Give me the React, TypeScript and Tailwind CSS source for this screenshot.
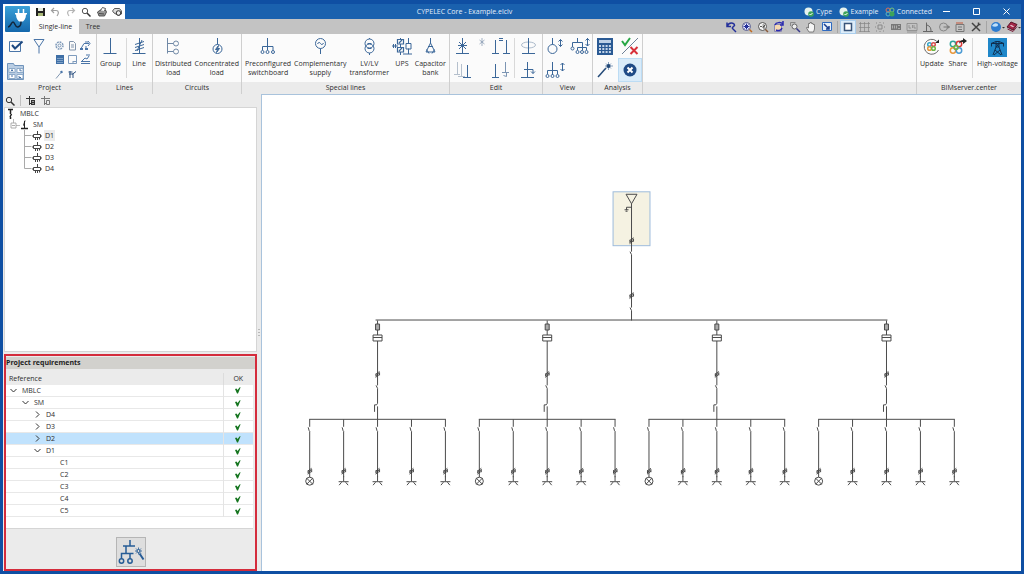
import type { ReactNode } from "react";
import clsx from "clsx";

type IconProps = { w?: number; h?: number; className?: string; children: ReactNode };

function Svg({ w = 16, h = 17, className, children }: IconProps) {
  return (
    <svg
      width={w}
      height={h}
      viewBox={`0 0 ${w} ${h}`}
      fill="none"
      stroke="currentColor"
      strokeWidth={1}
      className={clsx("shrink-0", className)}
      aria-hidden
    >
      {children}
    </svg>
  );
}

/* ---------- ribbon icons ---------- */

const GroupIcon = () => (
  <Svg w={14}>
    <path d="M7.5 0v15.5M0.5 15.5h13" />
  </Svg>
);

const LineIcon = () => (
  <Svg w={14}>
    <path d="M7.5 0v15.5M0.5 15.5h13M3 6.5l9-3M3 9.5l9-3M3 12.5l9-3M5 13l5-11" />
  </Svg>
);

const DistributedIcon = () => (
  <Svg w={14} className="text-[#7089a6]">
    <path d="M1.5 0v15.5M1.5 5.5h6M1.5 13.5h6" />
    <circle cx="10" cy="5.5" r="2.5" />
    <circle cx="10" cy="13.5" r="2.5" />
  </Svg>
);

const ConcentratedIcon = () => (
  <Svg w={12}>
    <circle cx="6.5" cy="11" r="4.5" />
    <path d="M6.5 0v6.5" />
    <path d="M7.5 7.5L4.5 11.5h2l-1 3 3-4h-2z" fill="currentColor" />
  </Svg>
);

const SwitchboardIcon = () => (
  <Svg w={16}>
    <path d="M7.5 0v12M2.5 12V8.5h10.500V12" />
    <circle cx="2.5" cy="14" r="1.5" />
    <circle cx="7.5" cy="14" r="1.5" />
    <circle cx="13" cy="14" r="1.5" />
  </Svg>
);

const SupplyIcon = () => (
  <Svg w={12}>
    <circle cx="6.5" cy="5.5" r="5" />
    <path d="M6.5 10.500v5.5M3.500 6c1-2 2-2 3-.5s2 1.500 3-.5" />
  </Svg>
);

const TransformerIcon = () => (
  <Svg w={12}>
    <circle cx="6.5" cy="5.500" r="4.500" />
    <circle cx="6.5" cy="10.500" r="4.500" />
    <path d="M6.5 0v1M6.5 15V17M4.5 5.5h4M4.5 10.500h4" />
  </Svg>
);

const UpsIcon = () => (
  <Svg w={20}>
    <path d="M0 8h6M1.5 6v4M3.5 6v4M8.500 0v1M8.5 6v3M8.500 14v3" />
    <path d="M5.500 1.500h6v4.500h-6zM5.500 9.500h6v4.500h-6zM7 5l3-3M7 13l3-3" strokeWidth={1.200} />
    <path d="M16.500 0v5.5M16.500 10.500v5.5M14 5.500h5v5.500h-5zM11 16h9" />
  </Svg>
);

const CapacitorIcon = () => (
  <Svg w={12}>
    <path d="M6.500 0v5M6.500 5l-4.500 9M6.500 5l4.500 9M2 14h9M4 8.500h5M2.500 11.500l2.500 4M10.500 11.500L8 15.500" />
  </Svg>
);

const CheckBoxIcon = () => (
  <Svg w={16} h={16}>
    <path d="M1.500 3.500h11v10h-11z" />
    <path d="M4 7l3 3.500 7.500-7" strokeWidth={2} className="text-[#1c4880]" />
  </Svg>
);

const FilterIcon = () => (
  <Svg w={12} h={16}>
    <path d="M1 1.500h10L6 9zM6 9v6.500" />
  </Svg>
);

const FolderGridIcon = () => (
  <Svg w={18} h={18}>
    <path d="M0.500 17.500v-16h6l1 2h9v14z" fill="#b9cde3" stroke="#6f93bb" />
    <path d="M2 6.500h6v4H2zM10 6.500h6v4h-6zM2 12.500h6v4H2zM10 12.500h6v4h-6z" fill="#fff" stroke="#8eabc9" />
    <path d="M4 9.500l1-2 1 2M12 8h2v1.500M4 14h2M12 14v1.500h2" />
  </Svg>
);

const projectTools: { name: string; art: ReactNode }[] = [
  {
    name: "Settings",
    art: (
      <g stroke="#7d98b8">
        <circle cx="5.5" cy="5.5" r="3.500" strokeWidth={1.500} strokeDasharray="1.800 0.900" />
        <circle cx="5.5" cy="5.5" r="1.500" />
      </g>
    ),
  },
  { name: "Report", art: <path d="M2.500 1.500h4l2 2v6.500h-6zM4 5h3M4 7h3" stroke="#8194ab" /> },
  {
    name: "Network",
    art: (
      <>
        <path d="M1 8.500l3-5h5M6 9V6M8 1l2 2.500L8 6M5 2h3" />
        <path d="M0 8h3v2H0zM5 8h3v2H5z" fill="currentColor" stroke="none" />
      </>
    ),
  },
  {
    name: "Table",
    art: (
      <>
        <path d="M2 1h8v9H2z" fill="#3f6fa6" stroke="none" />
        <path d="M3 4.500h6M3 6.500h6M3 8.500h6" stroke="#a9c2de" strokeWidth={0.6} />
      </>
    ),
  },
  { name: "Drawing sheet", art: <path d="M1.500 1.500h8v8h-8zM6 7.500h3.500M6 7v2.500" stroke="#7e9bbd" /> },
  { name: "Earthing", art: <path d="M1 9.500h9M1 7.500h9M2 7l3-3 2 1 2-3M6 1h4" /> },
  {
    name: "Pencil",
    art: (
      <>
        <path d="M2 9.500L7 3.500" stroke="#8096b0" />
        <path d="M6.500 3.500l2-1" strokeWidth={2} />
      </>
    ),
  },
  { name: "Cables", art: <path d="M3 2v7M6 4v5M1.500 3h4M2 5h3M5 5.500l4-3" stroke="#2b5080" /> },
];

const DeviceIcon = () => (
  <Svg>
    <path d="M7.500 0v15.500M1 15.500h13M4 4l7 7M11 4l-7 7M3 7.500h9" />
  </Svg>
);

const SparkIcon = () => (
  <Svg w={6} h={8} className="self-start text-[#7e93ac]">
    <path d="M3 0v8M0.500 2l5 4M5.500 2l-5 4" strokeWidth={0.7} />
  </Svg>
);

const CopyIcon = () => (
  <Svg w={18}>
    <path d="M3.500 2v13.500M0 15.500h7M14.500 2v13.500M11 15.500h7M7 0.500h4M7 2.500h4" />
  </Svg>
);

const RotateIcon = () => (
  <Svg>
    <ellipse cx="7.500" cy="7" rx="7" ry="3" stroke="#aebccc" />
    <path d="M7.500 0v15.500M1 15.500h13" />
  </Svg>
);

const StackIcon = () => (
  <Svg w={18}>
    <path d="M3.500 0v12.500M0 12.500h6M7.500 2v12.500M4 14.500h7" stroke="#b5c0cd" />
    <path d="M13.500 3v12.500M9 15.500h8" />
  </Svg>
);

const MoveIcon = () => (
  <Svg w={18}>
    <path d="M3.500 2v13.500M0 15.500h7" />
    <path d="M13.500 0v10M10 10.500h7M14.500 10.500v4l-3-1" stroke="#7c95b3" />
  </Svg>
);

const InsertIcon = () => (
  <Svg>
    <path d="M6.500 0v15.500M0 15.500h13M3 7.500h9M12 7.500v4M10 9.500l2 2 2-2" />
  </Svg>
);

const CircleHeightIcon = () => (
  <Svg w={18}>
    <circle cx="6.5" cy="11" r="4.500" />
    <path d="M6.5 0v6.500M14.500 1.500v7M12.500 3.500l2-2 2 2M12.500 6.500l2 2 2-2" />
  </Svg>
);

const TreeHeightIcon = () => (
  <Svg w={20}>
    <path d="M7.500 0v4M2.500 9V4.500h10V12M7.500 12V9.500h9V12M17.500 0v8M15.500 2.500l2-2 2 2M15.500 6l2 2 2-2" />
    <circle cx="2.5" cy="10.500" r="1.500" />
    <circle cx="7.500" cy="14" r="1.500" />
    <circle cx="12" cy="14" r="1.500" />
    <circle cx="16.500" cy="14" r="1.500" />
  </Svg>
);

const BoardHeightIcon = () => (
  <Svg w={20}>
    <path d="M7.500 0v13M2.500 12V8.500h10V12M17.500 1v8M15.500 3l2-2 2 2M15.500 7l2 2 2-2" />
    <circle cx="2.500" cy="14" r="1.500" />
    <circle cx="7.500" cy="14" r="1.500" />
    <circle cx="12.500" cy="14" r="1.500" />
  </Svg>
);

const CalculatorIcon = () => (
  <Svg w={16} h={17}>
    <path d="M0 0h16v17H0z" fill="#2a5a94" stroke="none" />
    <path d="M2 2h12v3H2z" fill="#bcd0e6" stroke="none" />
    <path d="M2 8h12M2 11h12M2 14h12" stroke="#c3d4e8" strokeWidth={2} strokeDasharray="2 1.300" />
  </Svg>
);

const CheckCrossIcon = () => (
  <Svg w={18} h={18}>
    <path d="M1 17L17 1" stroke="#6d8096" />
    <path d="M1 4l3 4 5-7" stroke="#28a745" strokeWidth={2} />
    <path d="M9.500 10l7 7M16.500 10l-7 7" stroke="#d8303a" strokeWidth={2} />
  </Svg>
);

const WandIcon = () => (
  <Svg w={16} h={16}>
    <path d="M1 15L9 6" strokeWidth={1.500} stroke="#244a78" />
    <path d="M11.500 0v8M8 4h8M9 1.500l5 5M14 1.500l-5 5" stroke="#6d8cb0" strokeWidth={0.8} />
    <circle cx="11.500" cy="4" r="2" fill="#244a78" stroke="none" />
  </Svg>
);

const CloseRoundIcon = () => (
  <Svg w={14} h={14}>
    <circle cx="7" cy="7" r="6.500" fill="#1f4a86" stroke="none" />
    <path d="M4.500 4.500l5 5M9.500 4.500l-5 5" stroke="#fff" strokeWidth={2} />
  </Svg>
);

const UpdateIcon = () => (
  <Svg w={17} h={17}>
    <path d="M13.500 3A7.500 7.500 0 1 0 15.500 12" stroke="#6b6b6b" />
    <path d="M12 5h4V1.500z" fill="#222" stroke="none" />
    <g strokeWidth={1.500}>
      <circle cx="6.500" cy="6.500" r="1.800" stroke="#35a6c9" />
      <circle cx="10.500" cy="6.500" r="1.800" stroke="#d84a4a" />
      <circle cx="6.500" cy="10.500" r="1.800" stroke="#e8973a" />
      <circle cx="10.500" cy="10.500" r="1.800" stroke="#6cb644" />
    </g>
  </Svg>
);

const ShareIcon = () => (
  <Svg w={18} h={17}>
    <g strokeWidth={1.500}>
      <circle cx="4" cy="6" r="2.700" stroke="#2fa39a" />
      <circle cx="10" cy="6" r="2.700" stroke="#d83a3a" />
      <circle cx="4" cy="12.500" r="2.700" stroke="#e8973a" />
      <circle cx="10" cy="12.500" r="2.700" stroke="#4a9ad4" />
      <circle cx="7" cy="9.500" r="2" stroke="#6cb644" />
    </g>
    <path d="M10 6c0-3 2-4 4-4V0l4 3-4 3V4c-2 0-3 0-4 2z" fill="#222" stroke="none" />
  </Svg>
);

const PylonIcon = () => (
  <Svg w={19} h={19}>
    <path d="M0 0h19v19H0z" fill="#1f87c9" stroke="none" />
    <g stroke="#0f2f50">
      <path d="M5 17l3-8V3.500M14 17l-3-8V3.500M3 5.500l5-2h3l5 2M3 5.500h13M8 9h3M7 12l6 5M12 12l-6 5M8 5.500L11 9M11 5.500L8 9M3.500 5.500v3M15.500 5.500v3" />
    </g>
  </Svg>
);

/* ---------- view toolbar on the right of the tabs ---------- */

const viewTools: { name: string; art: ReactNode }[] = [
  {
    name: "Zoom previous",
    art: (
      <>
        <path d="M2 1.500v4h4M2.500 5c1-4 7-4 7-.5L7 7" stroke="#24309a" strokeWidth={1.500} />
        <path d="M7 7l4 4" stroke="#24309a" strokeWidth={1.500} />
      </>
    ),
  },
  {
    name: "Zoom extents",
    art: (
      <>
        <circle cx="5.500" cy="5.500" r="4" stroke="#555a8a" fill="#eef" />
        <path d="M5.500 2.500v6M2.500 5.500h6M3.500 3.500l4 4M7.500 3.500l-4 4" stroke="#24309a" />
        <path d="M8.500 8.500L11 11" stroke="#c06a20" strokeWidth={1.500} />
      </>
    ),
  },
  {
    name: "Zoom x2",
    art: (
      <>
        <circle cx="5.500" cy="5.500" r="4" stroke="#555" fill="#f4f4f4" />
        <path d="M3 5.500h2M5.500 4H7.500v1.500h-1.500V7h2" stroke="#333" strokeWidth={0.8} />
        <path d="M8.500 8.500L11 11" stroke="#8a5a3a" strokeWidth={1.500} />
      </>
    ),
  },
  {
    name: "Redraw",
    art: (
      <>
        <path d="M1.500 3.500h7v7h-7z" fill="#f7d9b0" stroke="#8a8ab5" />
        <path d="M2 4c1-3 6-3 8-1M10 0v4H7M9 7c-1 3-4 3-6 2" stroke="#2a2ab0" strokeWidth={1.500} />
      </>
    ),
  },
  {
    name: "Zoom window",
    art: (
      <>
        <path d="M1.500 5V1.500h5" stroke="#888" />
        <circle cx="5.500" cy="5.500" r="2.500" stroke="#666" fill="#eee" />
        <path d="M7.500 7.500L11 11" stroke="#3a3a8a" strokeWidth={1.500} />
      </>
    ),
  },
  {
    name: "Pan",
    art: <path d="M4 11L1.500 7l.5-1 1.500 1V2.500H5V1.500h1.500v1H8V3.500h1.500V8L8.500 11z" fill="#f5f5f5" stroke="#666" strokeWidth={0.8} />,
  },
  {
    name: "Full screen",
    art: (
      <>
        <path d="M1.500 1.500h9v8h-9z" fill="#e8f0fa" stroke="#2f6ac0" />
        <path d="M3 3l5 5M8 5v3H5" stroke="#1b3f90" strokeWidth={1.500} />
      </>
    ),
  },
];

const snapTools: { name: string; active?: boolean; art: ReactNode }[] = [
  { name: "Frame", active: true, art: <path d="M2.500 2.500h7v7h-7z" fill="#fff" stroke="#38547a" strokeWidth={1.500} /> },
  { name: "Grid", art: <path d="M2.500 1v10M6.500 1v10M10.500 1v10M1 2.500h11M1 6.500h11M1 10.500h11" stroke="#858585" strokeWidth={0.7} /> },
  { name: "Snap", art: <path d="M4 4h4v4H4zM1 6h1M10 6h1M6 1v1M6 10v1M2 2h1M9 2h1M2 10h1M9 10h1" stroke="#888" /> },
  {
    name: "Keyboard",
    art: (
      <>
        <path d="M1 3h10v6H1z" fill="#777" stroke="none" />
        <path d="M2.500 4.500v3M4.500 4.500v3M6.500 4.500v3M8 4.500h2M8 7.500h2" stroke="#c3c3c3" strokeWidth={0.7} />
      </>
    ),
  },
  { name: "Measure", art: <path d="M1 2.500h10v7H1zM3 4v3h2M6.500 4v3M8 4v3h2M1 11h10" stroke="#888" strokeWidth={0.8} /> },
  { name: "Angle", art: <path d="M4.500 1.500v8.500M1 10.500h10M5 4c3 1 4 3 4 6" stroke="#666" /> },
  {
    name: "Circle",
    art: (
      <>
        <circle cx="5.500" cy="6" r="4" stroke="#888" />
        <path d="M5.500 6h6M9.500 4.500L11.500 6l-2 1.500" stroke="#777" />
      </>
    ),
  },
  {
    name: "Layers",
    art: (
      <>
        <path d="M2 3.500h8v7H2zM4 6h4M4 8.500h4" stroke="#777" />
        <path d="M2 2h7" stroke="#c4573a" />
      </>
    ),
  },
  { name: "Tools", art: <path d="M2 2l8 8M9.500 3L2 10M8.500 1.500v2h2" stroke="#444" strokeWidth={1.500} /> },
];

/* ---------- ribbon building blocks ---------- */

function RibbonGroup({ title, className, children }: { title: string; className: string; children: ReactNode }) {
  return (
    <section className={clsx("flex shrink-0 flex-col border-r border-[#cfcfcf]", className)}>
      <div className="flex h-12 bg-[#fbfbfb]">{children}</div>
      <h2 className="h-3 bg-[#ebebeb] text-center leading-3">{title}</h2>
    </section>
  );
}

function BigButton({ icon, lines }: { icon: ReactNode; lines: string[] }) {
  return (
    <button className="flex flex-col items-center gap-1 whitespace-nowrap pt-1 leading-[9px] text-[#3b6799]">
      {icon}
      <span className="text-[#2d2d2d]">
        {lines.map((l) => (
          <span key={l} className="block">
            {l}
          </span>
        ))}
      </span>
    </button>
  );
}

function IconButton({ label, className, children }: { label: string; className?: string; children?: ReactNode }) {
  return (
    <button aria-label={label} className={clsx("flex items-center justify-center", className)}>
      {children}
    </button>
  );
}

const Divider = () => <span className="my-1 w-px bg-[#d9d9d9]" />;

function Ribbon() {
  return (
    <div className="flex text-[#2d2d2d]">
      <RibbonGroup title="Project" className="w-[94px]">
        <div className="flex w-full gap-1 px-1 pt-1 text-[#4a75a8]">
          <div className="flex flex-col items-center gap-2">
            <IconButton label="General options"><CheckBoxIcon /></IconButton>
            <IconButton label="Libraries"><FolderGridIcon /></IconButton>
          </div>
          <IconButton label="Supply" className="ml-1 self-start"><FilterIcon /></IconButton>
          <div className="ml-1 grid flex-1 grid-cols-3 grid-rows-3">
            {projectTools.map((t) => (
              <IconButton key={t.name} label={t.name}>
                <Svg w={11} h={11}>{t.art}</Svg>
              </IconButton>
            ))}
          </div>
        </div>
      </RibbonGroup>

      <RibbonGroup title="Lines" className="w-14">
        <div className="flex w-full justify-between pl-[3px] pr-[6px]">
          <BigButton icon={<GroupIcon />} lines={["Group"]} />
          <Divider />
          <BigButton icon={<LineIcon />} lines={["Line"]} />
        </div>
      </RibbonGroup>

      <RibbonGroup title="Circuits" className="w-[89px]">
        <div className="flex w-full justify-between px-[2px]">
          <BigButton icon={<DistributedIcon />} lines={["Distributed", "load"]} />
          <BigButton icon={<ConcentratedIcon />} lines={["Concentrated", "load"]} />
        </div>
      </RibbonGroup>

      <RibbonGroup title="Special lines" className="w-[208px]">
        <div className="flex w-full justify-between px-[3px]">
          <BigButton icon={<SwitchboardIcon />} lines={["Preconfigured", "switchboard"]} />
          <BigButton icon={<SupplyIcon />} lines={["Complementary", "supply"]} />
          <BigButton icon={<TransformerIcon />} lines={["LV/LV", "transformer"]} />
          <BigButton icon={<UpsIcon />} lines={["UPS"]} />
          <BigButton icon={<CapacitorIcon />} lines={["Capacitor", "bank"]} />
        </div>
      </RibbonGroup>

      <RibbonGroup title="Edit" className="w-[93px]">
        <div className="grid flex-1 grid-cols-[26px_12px_26px] grid-rows-2 text-[#3b6799]">
          <IconButton label="Edit device"><DeviceIcon /></IconButton>
          <IconButton label="New" className="pt-1"><SparkIcon /></IconButton>
          <IconButton label="Copy"><CopyIcon /></IconButton>
          <IconButton label="Stack"><StackIcon /></IconButton>
          <span />
          <IconButton label="Move"><MoveIcon /></IconButton>
        </div>
        <Divider />
        <div className="grid w-[27px] grid-rows-2 text-[#3b6799]">
          <IconButton label="Rotate"><RotateIcon /></IconButton>
          <IconButton label="Insert"><InsertIcon /></IconButton>
        </div>
      </RibbonGroup>

      <RibbonGroup title="View" className="w-[50px]">
        <div className="grid w-full grid-cols-2 grid-rows-2 text-[#3b6799]">
          <IconButton label="Load height"><CircleHeightIcon /></IconButton>
          <IconButton label="Tree height"><TreeHeightIcon /></IconButton>
          <IconButton label="Board height"><BoardHeightIcon /></IconButton>
        </div>
      </RibbonGroup>

      <RibbonGroup title="Analysis" className="w-[50px]">
        <div className="grid w-full grid-cols-2 grid-rows-2">
          <IconButton label="Calculate"><CalculatorIcon /></IconButton>
          <IconButton label="Check"><CheckCrossIcon /></IconButton>
          <IconButton label="Design"><WandIcon /></IconButton>
          <IconButton label="Requirements" className="border border-[#bcdcf4] bg-[#d9ebf9]"><CloseRoundIcon /></IconButton>
        </div>
      </RibbonGroup>

      <div className="flex flex-1 flex-col border-r border-[#cfcfcf]">
        <div className="h-12 bg-[#fbfbfb]" />
        <div className="h-3 bg-[#ebebeb]" />
      </div>

      <section className="flex w-[104px] shrink-0 flex-col">
        <div className="flex h-12 justify-between bg-[#fbfbfb] px-[3px]">
          <BigButton icon={<UpdateIcon />} lines={["Update"]} />
          <BigButton icon={<ShareIcon />} lines={["Share"]} />
          <Divider />
          <button className="flex flex-col items-center gap-[2px] whitespace-nowrap pt-1 leading-[9px]">
            <PylonIcon />
            High-voltage
          </button>
        </div>
        <h2 className="h-3 bg-[#ebebeb] text-center leading-3">BIMserver.center</h2>
      </section>
    </div>
  );
}

/* ---------- title bar ---------- */

const quickTools: { name: string; art: ReactNode }[] = [
  {
    name: "Save",
    art: (
      <>
        <path d="M1 1h9v8H1z" fill="#222" stroke="none" />
        <path d="M3 1h5v3H3z" fill="#e8ecdc" stroke="none" />
        <path d="M3 6h5v3H3z" fill="#a9b878" stroke="none" />
      </>
    ),
  },
  { name: "Undo", art: <path d="M4 1L1.500 3.500 4 6M1.500 3.500H6c3 0 3 3 1 5.500" stroke="#9f9f9f" strokeWidth={1.200} /> },
  { name: "Redo", art: <path d="M6 1l2.500 2.500L6 6M8.500 3.500H4c-3 0-3 3-1 5.500" stroke="#b4b4b4" strokeWidth={1.200} /> },
  {
    name: "Search",
    art: (
      <>
        <circle cx="4" cy="4" r="2.700" stroke="#555" />
        <path d="M6 6l3.500 3.500" stroke="#333" strokeWidth={1.500} />
      </>
    ),
  },
  {
    name: "Print",
    art: (
      <>
        <path d="M0.500 5l3-2h5l1 2-2 4H2z" fill="#999" stroke="#333" strokeWidth={0.8} />
        <path d="M3.500 3.500l2-3 3 1-1 2.500M2 6.500l5 .5" fill="#fff" stroke="#333" strokeWidth={0.8} />
      </>
    ),
  },
  {
    name: "Export",
    art: (
      <>
        <path d="M0.500 4l2-2.500h5L9.500 4v3L6.500 8.500 2 6z" fill="#ddd" stroke="#333" strokeWidth={0.8} />
        <circle cx="6.500" cy="6" r="2.300" fill="#eee" stroke="#333" />
      </>
    ),
  },
];

function Globe() {
  return (
    <Svg w={10} h={10}>
      <circle cx="4.500" cy="4.500" r="4" fill="#e6f2ee" stroke="none" />
      <circle cx="7" cy="7" r="2.800" fill="#3da35a" stroke="none" />
      <path d="M5.500 7l1 1 2-2" stroke="#fff" />
    </Svg>
  );
}

function AppLogo() {
  return (
    <div className="bg-white p-[2px]">
      <svg width={25} height={26} viewBox="0 0 25 26" fill="none" aria-hidden>
        <defs>
          <linearGradient id="logo" x1="0" y1="0" x2="0" y2="1">
            <stop offset="0" stopColor="#3aa0d8" />
            <stop offset="1" stopColor="#1568ac" />
          </linearGradient>
        </defs>
        <rect width="25" height="26" rx="1" fill="url(#logo)" />
        <path d="M3 21c3 0 3-5 5-5s2 6 5 5 3-3 3-6" stroke="#12263c" strokeWidth={1.500} />
        <path d="M10 7h12v1.500h-1c0 4-2 6-3 7h-4c-1-1-3-3-3-7h-1z" fill="#fff" />
        <path d="M13.500 3v4M18.500 3v4" stroke="#fff" strokeWidth={1.500} />
      </svg>
    </div>
  );
}

function Header() {
  return (
    <header className="flex bg-[#c3c3c3]">
      <AppLogo />
      <div className="flex flex-1 flex-col">
        <div className="flex h-[15px] bg-[#1a61ae] text-[#e4eefa]">
          <div className="flex w-[93px] items-center justify-around bg-white">
            {quickTools.map((t) => (
              <button key={t.name} aria-label={t.name}>
                <Svg w={10} h={10}>{t.art}</Svg>
              </button>
            ))}
          </div>
          <h1 className="flex-1 self-center text-center">CYPELEC Core - Example.elclv</h1>
          <div className="flex w-[128px] items-center justify-between">
            <span className="flex items-center gap-[2px]"><Globe />Cype</span>
            <span className="flex items-center gap-[2px]"><Globe />Example</span>
            <span className="flex items-center gap-[2px]">
              <Svg w={10} h={10}>
                <circle cx="3" cy="3" r="2" stroke="#d8705a" />
                <circle cx="7" cy="3" r="2" stroke="#7ac27a" />
                <circle cx="3" cy="7" r="2" stroke="#5ab7c2" />
                <circle cx="7" cy="7" r="2.500" fill="#3da35a" stroke="none" />
              </Svg>
              Connected
            </span>
          </div>
          <div className="flex w-[89px] items-center justify-around text-white">
            <button aria-label="Minimize"><Svg w={7} h={7}><path d="M0 3.500h7" /></Svg></button>
            <button aria-label="Maximize"><Svg w={7} h={7}><path d="M0.500 0.500h6v6h-6z" /></Svg></button>
            <button aria-label="Close"><Svg w={7} h={7}><path d="M0.500 0.500l6 6M6.500 0.500l-6 6" /></Svg></button>
          </div>
        </div>
        <div className="flex h-[15px] items-center">
          <nav className="flex self-stretch">
            <button className="w-[47px] bg-[#fbfbfb] text-[#2d2d2d]">Single-line</button>
            <button className="w-7 text-[#2d2d2d]">Tree</button>
          </nav>
          <div className="ml-auto flex h-full items-center">
            {viewTools.map((t) => (
              <IconButton key={t.name} label={t.name} className="w-4">
                <Svg w={12} h={12}>{t.art}</Svg>
              </IconButton>
            ))}
            <span className="mx-[2px] h-3 w-px bg-[#a5a5a5]" />
            {snapTools.map((t) => (
              <IconButton
                key={t.name}
                label={t.name}
                className={clsx("h-[14px] w-4", t.active && "border border-[#a9cdec] bg-[#dcecf9]")}
              >
                <Svg w={12} h={12}>{t.art}</Svg>
              </IconButton>
            ))}
            <span className="mx-[2px] h-3 w-px bg-[#a5a5a5]" />
            <IconButton label="Help" className="w-4">
              <Svg w={15} h={12}>
                <circle cx="6" cy="6" r="5" fill="#2c7cd0" stroke="none" />
                <path d="M2 5c2-4 6-3 6-1S4 6 2 5z" fill="#bfe0fa" stroke="none" />
                <path d="M12 6h3l-1.500 1.500z" fill="#333" stroke="none" />
              </Svg>
            </IconButton>
            <IconButton label="Manual" className="w-4">
              <Svg w={15} h={12}>
                <path d="M1 6l4-5 6 2.500-4 5.500z" fill="#a52a4a" stroke="#5a1428" />
                <path d="M1.500 8l5.500 2.500 4-5" stroke="#7a1c38" />
                <path d="M4.500 4.500l3 1" stroke="#fff" />
                <path d="M12 6h3l-1.500 1.500z" fill="#333" stroke="none" />
              </Svg>
            </IconButton>
          </div>
        </div>
      </div>
    </header>
  );
}

/* ---------- installation tree ---------- */

function BoardGlyph() {
  return (
    <Svg w={10} h={11} className="text-[#444]">
      <path d="M5.500 1v3M1.500 4.500h7v3h-7zM0 6h1.500M8.500 6H10M3.500 7.500V10M5.500 7.500V10M7.500 7.500V9.500" />
    </Svg>
  );
}

function InstallationTree() {
  return (
    <>
      <div className="flex h-[13px] items-center gap-[5px] pl-px text-[#333]">
        <button aria-label="Find">
          <Svg w={10} h={10}>
            <circle cx="4" cy="4" r="2.700" />
            <path d="M6 6l3.500 3.500" strokeWidth={1.500} />
          </Svg>
        </button>
        <span className="h-[11px] w-px bg-[#c0c0c0]" />
        <button aria-label="Expand all">
          <Svg w={10} h={10}>
            <path d="M0 2.500h9M3.500 0v9M3.500 7.500h2" />
            <path d="M5 4h4v5H5z" fill="currentColor" stroke="none" />
            <path d="M6 5.500h2M6 7.500h2" stroke="#ccc" strokeWidth={0.7} />
          </Svg>
        </button>
        <button aria-label="Collapse all">
          <Svg w={10} h={10} className="text-[#777]">
            <path d="M0 2.500h9M3.500 0v9M3.500 7.500h2M5.500 4.500h3v4h-3z" />
          </Svg>
        </button>
      </div>
      <div className="min-h-0 flex-1 border border-[#d5d5d5] bg-white leading-[11px]">
        <div className="flex items-center gap-1 pl-[2px]">
          <Svg w={9} h={11} className="text-[#222]">
            <path d="M1 1.500h5M3.500 2v4M4.500 6L3 9M3.500 9v2" strokeWidth={1.500} />
          </Svg>
          MBLC
        </div>
        <div className="flex items-center pl-[3px]">
          <Svg w={24} h={11}>
            <path d="M5.500 0v4M8 6.500h4" stroke="#bbb" />
            <path d="M3 4h5v5H3zM4 6.500h3" stroke="#999" strokeWidth={0.8} />
            <path d="M17 1.500l-1.500 5M16.500 2v7" stroke="#222" />
            <path d="M13 9.500h7" stroke="#222" strokeWidth={1.500} />
          </Svg>
          <span className="ml-px">SM</span>
        </div>
        {["D1", "D2", "D3", "D4"].map((d, i) => (
          <div key={d} className="flex items-center pl-[19px]">
            <Svg w={8} h={11}>
              <path d={i === 3 ? "M0.500 0v5.500h7" : "M0.500 0v11M0.500 5.500h7"} stroke="#aaa" />
            </Svg>
            <BoardGlyph />
            <span className={clsx("ml-[2px] px-px", i === 0 && "bg-[#ececec]")}>{d}</span>
          </div>
        ))}
      </div>
    </>
  );
}

/* ---------- requirements panel ---------- */

const requirements: { ref: string; pad: string; open?: boolean; selected?: boolean }[] = [
  { ref: "MBLC", pad: "pl-1", open: true },
  { ref: "SM", pad: "pl-4", open: true },
  { ref: "D4", pad: "pl-7", open: false },
  { ref: "D3", pad: "pl-7", open: false },
  { ref: "D2", pad: "pl-7", open: false, selected: true },
  { ref: "D1", pad: "pl-7", open: true },
  { ref: "C1", pad: "pl-[54px]" },
  { ref: "C2", pad: "pl-[54px]" },
  { ref: "C3", pad: "pl-[54px]" },
  { ref: "C4", pad: "pl-[54px]" },
  { ref: "C5", pad: "pl-[54px]" },
];

function Requirements() {
  return (
    <section className="mt-[2px] border-2 border-[#d42c3c] pt-px">
      <h2 className="h-3 bg-[#d2d1cd] font-bold leading-3 text-[#222]">Project requirements</h2>
      <div className="mr-[2px] mt-1 border-b border-[#d5d5d5] bg-white pb-[11px]">
        <table className="w-full table-fixed border-collapse">
          <thead>
            <tr className="h-3 bg-[#ebebeb] leading-[11px]">
              <th scope="col" className="p-0 pl-[3px] text-left font-normal">Reference</th>
              <th scope="col" className="w-[30px] border-l border-[#dcdcdc] p-0 font-normal">OK</th>
            </tr>
          </thead>
          <tbody>
            {requirements.map((r) => (
              <tr key={r.ref} className={clsx("h-3 border-b border-[#e8e8e8] leading-[11px]", r.selected && "bg-[#c0e2fd]")}>
                <td className={clsx("p-0", r.pad)}>
                  <span className="flex items-center gap-[5px]">
                    {r.open !== undefined && (
                      <Svg w={7} h={7} className="text-[#333]">
                        <path d={r.open ? "M0.500 2l3 3 3-3" : "M2 0.500l3 3-3 3"} />
                      </Svg>
                    )}
                    {r.ref}
                  </span>
                </td>
                <td className="border-l border-[#e4e4e4] p-0">
                  <svg width={8} height={8} viewBox="0 0 8 8" className="mx-auto" role="img" aria-label="OK">
                    <path d="M1 3l1.500-.5 1 1.500L6 1l.5.5-2.500 6H3z" fill="#15751f" />
                  </svg>
                </td>
              </tr>
            ))}
          </tbody>
        </table>
      </div>
      <div className="flex h-10 items-end justify-center pb-[2px]">
        <button
          aria-label="Design installation"
          className="flex size-[30px] items-center justify-center border border-[#b5b5b5] bg-[#dedede] text-[#265c96]"
        >
          <Svg w={28} h={28}>
            <g strokeWidth={1.500}>
              <path d="M13 2v6M6 8h12M9 8v8M4.500 21v-5.500h12M13 16v5" />
              <circle cx="4.500" cy="23" r="2.200" />
              <circle cx="13" cy="23" r="2.200" />
              <path d="M22.500 15.500l4 6" strokeWidth={2} />
            </g>
            <path d="M21.500 9.500v7M18 13h7M19 10.500l5 5M24 10.500l-5 5" strokeWidth={0.8} />
            <circle cx="21.500" cy="13" r="1.500" fill="#dedede" />
          </Svg>
        </button>
      </div>
    </section>
  );
}

/* ---------- single-line diagram ---------- */

const FEEDERS = [115, 285, 455, 625];
const LOADS = [-68, -34, 0, 34, 68];

// Phase marks drawn across a conductor
function CableMark({ y }: { y: number }) {
  return (
    <path
      d={`M-2 ${y}l4-3M-2 ${y + 1.5}l4-3M-2 ${y + 3}l4-3M-1.500 ${y - 1}v3M2 ${y - 2}v3`}
      stroke="#333"
      strokeWidth={0.8}
    />
  );
}

function Feeder({ x }: { x: number }) {
  return (
    <g transform={`translate(${x} 0)`}>
      <path d="M0 226v65M0 294v15M0 312v13" />
      <path d="M-2 229.500h4v6h-4z" fill="#aaa" />
      <path d="M-4.500 240.500h9v6h-9zM-4.500 243h9" fill="#fff" />
      <CableMark y={280} />
      <path d="M-1.500 291l1.500 3M0 309l-1 1.500h-2v7" />
      <path d="M-68.500 325h137" />
      {LOADS.map((dx, i) => (
        <g key={dx} transform={`translate(${dx} 0)`}>
          <path d="M0 325v7.500M-1.500 333l1 3.500L0 337M0 337v46" />
          <CableMark y={377} />
          {i === 0 ? (
            <>
              <circle cx="0" cy="387" r="4" fill="#fff" />
              <path d="M-3 384l6 6M3 384l-6 6" />
            </>
          ) : (
            <path d="M0 382v5M-5 387.500H5M-2 388l-2.500 3M2 388l2.500 3" />
          )}
        </g>
      ))}
    </g>
  );
}

function Diagram() {
  return (
    <main className="min-w-0 flex-1 border-l border-t border-[#a9c3dc] bg-white">
      <svg
        viewBox="0 0 759 477"
        className="h-full w-full"
        fill="none"
        stroke="#4a4a4a"
        strokeWidth={1}
        role="img"
        aria-label="Single-line diagram"
      >
        <rect x="351" y="97" width="37" height="54" fill="#f5f2e2" stroke="#9dbbdc" />
        <g transform="translate(369.5 0)">
          <path d="M-5.500 99.500h11L0 109zM0 109v48M0 112.500h-5v3M-7 115h4M-6 116.500h2" />
          <CableMark y={146} />
          <path d="M-1.500 157l1.500 3M0 160v53M-1.500 213l1.500 3M0 216v10" />
          <CableMark y={201} />
        </g>
        <path d="M113 225.500h513" />
        {FEEDERS.map((x) => (
          <Feeder key={x} x={x} />
        ))}
      </svg>
    </main>
  );
}

export default function App() {
  return (
    <div className="flex h-screen min-h-0 flex-col border-x-[3px] border-b-[3px] border-t-4 border-[#0f4fa3] bg-[#ebebeb] font-['Open_Sans',sans-serif] text-[7px] leading-[9px] text-[#2d2d2d]">
      <Header />
      <Ribbon />
      <div className="flex min-h-0 flex-1">
        <aside className="flex w-[254px] shrink-0 flex-col pl-px">
          <InstallationTree />
          <Requirements />
        </aside>
        <div className="flex w-1 items-center justify-center text-[#888]" aria-hidden>
          <Svg w={2} h={8}><path d="M1 0v8" strokeDasharray="1 2" /></Svg>
        </div>
        <Diagram />
      </div>
    </div>
  );
}
